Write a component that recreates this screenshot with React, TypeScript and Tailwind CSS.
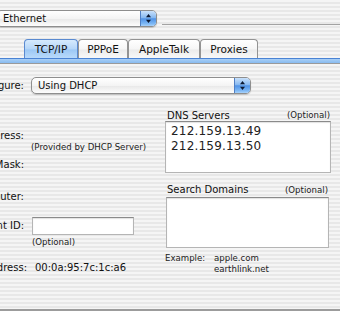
import React from 'react';

const font = "font-['DejaVu_Sans','Liberation_Sans',sans-serif]";

function Arrows() {
  return (
    <svg width="7" height="11" viewBox="0 0 7 11">
      <path d="M3.5 1 L6 4.2 L1 4.2 Z" fill="#0c1830" />
      <path d="M3.5 10 L6 6.8 L1 6.8 Z" fill="#0c1830" />
    </svg>
  );
}

function PopUp({ label, className }: { label: string; className: string }) {
  return (
    <div
      className={`flex h-[17px] overflow-hidden rounded-[5px] border border-[#8e8e8e] bg-[linear-gradient(#ffffff,#f4f4f4_50%,#e9e9e9_55%,#fdfdfd)] shadow-[0_1px_1px_rgba(0,0,0,0.18)] ${className}`}
    >
      <div className="flex flex-1 items-center pl-[6px] text-[10px] leading-none text-[#111]">{label}</div>
      <div className="flex w-[16px] items-center justify-center border-l border-[#4f7fc4] bg-[linear-gradient(#c9e1fb,#86b8f0_45%,#4f92e6_52%,#7fb9f5_85%,#a8d2fb)]">
        <Arrows />
      </div>
    </div>
  );
}

function Tab({ label, width, selected }: { label: string; width: string; selected?: boolean }) {
  return (
    <div
      className={`flex h-[19px] items-center justify-center rounded-t-[4px] border border-b-0 text-[10.5px] leading-none text-[#111] ${width} ${
        selected
          ? 'border-[#5a8ad0] bg-[linear-gradient(#d6eafd,#b5d6f8_50%,#9cc8f5_55%,#b9dafb)]'
          : 'border-[#939393] bg-[linear-gradient(#ffffff,#f6f6f6_50%,#ebebeb_55%,#f8f8f8)]'
      }`}
    >
      {label}
    </div>
  );
}

function Label({ text, width = 'w-[24px]' }: { text: string; width?: string }) {
  return (
    <div className={`flex shrink-0 justify-end overflow-hidden whitespace-nowrap ${width}`}>
      <span className="text-[10px] leading-[12px] text-[#111]">{text}</span>
    </div>
  );
}

function Field({ className, children }: { className: string; children?: React.ReactNode }) {
  return (
    <div
      className={`border border-[#b5b5b5] border-t-[#8a8a8a] bg-white shadow-[inset_0_1px_1px_rgba(0,0,0,0.12)] ${className}`}
    >
      {children}
    </div>
  );
}

export default function App() {
  return (
    <div
      className={`flex h-[311px] w-[340px] flex-col overflow-hidden bg-[repeating-linear-gradient(#f5f5f5_0px,#f5f5f5_2px,#e8e8e8_2px,#e8e8e8_4px)] ${font}`}
    >
      {/* location popup */}
      <div className="mt-[10px] flex items-start">
        <PopUp label="Ethernet" className="-ml-[4px] w-[161px]" />
        <div className="ml-[5px] mt-[14px] h-px flex-1 bg-[#a3a3a3]" />
      </div>

      {/* tabs */}
      <div className="mt-[12px] flex pl-[24px]">
        <Tab label="TCP/IP" width="w-[54px]" selected />
        <Tab label="PPPoE" width="w-[50px]" />
        <Tab label="AppleTalk" width="w-[72px]" />
        <Tab label="Proxies" width="w-[58px]" />
      </div>
      <div className="h-[6px] border-t border-b border-t-[#4a83d4] border-b-[#9a9a9a] bg-[linear-gradient(#a9cff6,#88bbf0)]" />

      {/* configure */}
      <div className="mt-[13px] flex items-center">
        <Label text="Configure:" />
        <PopUp label="Using DHCP" className="ml-[7px] w-[220px]" />
      </div>

      <div className="flex">
        {/* left column */}
        <div className="flex w-[165px] shrink-0 flex-col">
          <div className="mt-[36px] flex h-[12px] items-center">
            <Label text="IP Address:" />
          </div>
          <div className="h-[11px] pl-[31px] text-[8.6px] leading-[11px] text-[#222]">(Provided by DHCP Server)</div>
          <div className="mt-[6px] flex h-[12px] items-center">
            <Label text="Subnet Mask:" />
          </div>
          <div className="mt-[20px] flex h-[12px] items-center">
            <Label text="Router:" />
          </div>
          <div className="mt-[14px] flex h-[18px] items-center">
            <Label text="DHCP Client ID:" />
            <Field className="ml-[8px] h-[18px] w-[102px]" />
          </div>
          <div className="mt-[2px] h-[11px] pl-[32px] text-[8.6px] leading-[11px] text-[#222]">(Optional)</div>
          <div className="mt-[14px] flex h-[12px] items-center">
            <Label text="Ethernet Address:" width="w-[27px]" />
            <span className="ml-[8px] text-[10px] leading-[12px] text-[#111]">00:0a:95:7c:1c:a6</span>
          </div>
        </div>

        {/* right column */}
        <div className="flex w-[166px] flex-col">
          <div className="mt-[16px] flex h-[11px] items-center justify-between pl-[2px] pr-[1px]">
            <span className="text-[10px] leading-none text-[#111]">DNS Servers</span>
            <span className="text-[8.6px] leading-none text-[#222]">(Optional)</span>
          </div>
          <Field className="h-[52px] w-[166px] px-[5px] pt-[2px]">
            <div className="text-[12px] leading-[15px] tracking-[0.2px] text-[#222]">212.159.13.49</div>
            <div className="text-[12px] leading-[15px] tracking-[0.2px] text-[#222]">212.159.13.50</div>
          </Field>
          <div className="mt-[10px] flex h-[14px] items-center justify-between pl-[2px] pr-[3px]">
            <span className="text-[10px] leading-none text-[#111]">Search Domains</span>
            <span className="text-[8.6px] leading-none text-[#222]">(Optional)</span>
          </div>
          <Field className="ml-[1px] h-[51px] w-[163px]" />
          <div className="mt-[5px] flex text-[8.6px] leading-[11px] text-[#222]">
            <span className="w-[49px]">Example:</span>
            <div className="flex flex-col">
              <span>apple.com</span>
              <span>earthlink.net</span>
            </div>
          </div>
        </div>
      </div>

      <div className="mt-auto h-[2px] bg-[#9c9c9c]" />
    </div>
  );
}
